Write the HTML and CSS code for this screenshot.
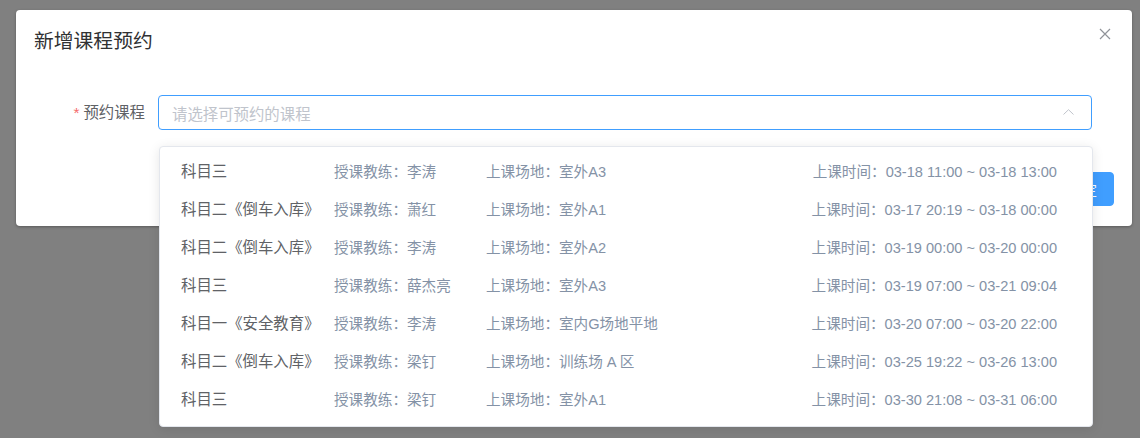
FILE: index.html
```html
<!DOCTYPE html>
<html lang="zh-CN">
  <head>
    <meta charset="UTF-8" />
    <meta name="viewport" content="width=device-width, initial-scale=1.0" />
    <title>新增课程预约</title>
    <link rel="stylesheet" href="styles.css">
  </head>
  <body>
    <div class="overlay">
      <div class="dialog">
        <div class="dialogHeader">
          <span class="dialogTitle">新增课程预约</span>
          <button class="closeBtn" type="button">
            <svg width="12" height="12" viewBox="0 0 12 12">
              <path d="M1 1 L11 11 M11 1 L1 11" stroke="#909399" stroke-width="1.2" fill="none" />
            </svg>
          </button>
        </div>

        <div class="dialogBody">
          <div class="formItem">
            <label class="formLabel"><span class="req">*</span>预约课程</label>
            <div class="select">
              <div class="selectInput">
                <span class="placeholder">请选择可预约的课程</span>
                <svg class="arrow" width="11" height="6" viewBox="0 0 11 6">
                  <path d="M0.5 5.5 L5.5 0.7 L10.5 5.5" stroke="#c0c4cc" stroke-width="1" fill="none" />
                </svg>
              </div>

              <!-- dropdown list, drawn over the footer -->
              <ul class="dropdown" id="courseList"></ul>
            </div>
          </div>
        </div>

        <div class="dialogFooter">
          <button class="btn" type="button">取 消</button>
          <button class="btn btn-blue" type="button">确 定</button>
        </div>
      </div>
    </div>

    <script>
      const courses = [
        ["科目三", "李涛", "室外A3", "03-18 11:00 ~ 03-18 13:00"],
        ["科目二《倒车入库》", "萧红", "室外A1", "03-17 20:19 ~ 03-18 00:00"],
        ["科目二《倒车入库》", "李涛", "室外A2", "03-19 00:00 ~ 03-20 00:00"],
        ["科目三", "薛杰亮", "室外A3", "03-19 07:00 ~ 03-21 09:04"],
        ["科目一《安全教育》", "李涛", "室内G场地平地", "03-20 07:00 ~ 03-20 22:00"],
        ["科目二《倒车入库》", "梁钉", "训练场 A 区", "03-25 19:22 ~ 03-26 13:00"],
        ["科目三", "梁钉", "室外A1", "03-30 21:08 ~ 03-31 06:00"],
      ];

      const list = document.getElementById("courseList");
      let html = "";
      for (let i = 0; i < courses.length; i++) {
        html += `<li class="option">
            <span class="colName">${courses[i][0]}</span>
            <span class="colCoach">授课教练：${courses[i][1]}</span>
            <span class="colPlace">上课场地：${courses[i][2]}</span>
            <span class="colTime">上课时间：${courses[i][3]}</span>
          </li>`;
      }
      list.innerHTML = html;
    </script>
  </body>
</html>
```

FILE: styles.css
```css
* {
  box-sizing: border-box;
}
body {
  margin: 0;
  font-family: "Liberation Sans", "Noto Sans CJK SC", sans-serif;
  background: #808080;
}
.overlay {
  height: 438px;
  padding: 10px 8px 0 16px;
}
.dialog {
  width: 1116px;
  background: #fff;
  border-radius: 4px;
  box-shadow: 0 1px 3px rgba(0, 0, 0, 0.3);
}
.dialogHeader {
  display: flex;
  justify-content: space-between;
  align-items: flex-start;
  padding: 18px 21px 10px 18px;
}
.dialogTitle {
  font-size: 19.8px;
  line-height: 26px;
  color: #303133;
}
.closeBtn {
  background: transparent;
  border: none;
  padding: 0;
  width: 12px;
  height: 12px;
  display: flex;
}
.dialogBody {
  padding: 31px 40px 0 22px;
}
.formItem {
  display: flex;
  height: 35px;
  margin-bottom: 24px;
}
.formLabel {
  width: 120px;
  padding-right: 13px;
  text-align: right;
  font-size: 15.4px;
  line-height: 35px;
  color: #606266;
}
.req {
  color: #f56c6c;
  margin-right: 4px;
}
.select {
  flex: 1;
  position: relative;
}
.selectInput {
  height: 35px;
  border: 1px solid #409eff;
  border-radius: 4px;
  display: flex;
  align-items: center;
  justify-content: space-between;
  padding: 0 17px 0 13px;
}
.placeholder {
  font-size: 15.4px;
  color: #c0c4cc;
}
.arrow {
  margin-bottom: 2px;
}
.dropdown {
  position: absolute;
  z-index: 10;
  top: 51px;
  left: 1px;
  width: 934px;
  margin: 0;
  padding: 4px 0 9px;
  list-style: none;
  background: #fff;
  border: 1px solid #e4e7ed;
  border-radius: 4px;
  box-shadow: 0 2px 12px rgba(0, 0, 0, 0.1);
}
.option {
  display: flex;
  height: 38px;
  align-items: center;
  padding: 0 35px 0 21px;
  font-size: 14.6px;
  color: #8492a6;
  white-space: nowrap;
}
.colName {
  width: 153px;
  font-size: 15.4px;
  color: #606266;
}
.colCoach {
  width: 152px;
}
.colPlace {
  flex: 1;
}
.dialogFooter {
  display: flex;
  justify-content: flex-end;
  gap: 11px;
  padding: 18px 18px 20px;
}
.btn {
  height: 34px;
  padding: 0 16px;
  font-family: inherit;
  font-size: 13.2px;
  color: #606266;
  background: #fff;
  border: 1px solid #dcdfe6;
  border-radius: 4px;
}
.btn-blue {
  color: #fff;
  background: #409eff;
  border-color: #409eff;
}
```
